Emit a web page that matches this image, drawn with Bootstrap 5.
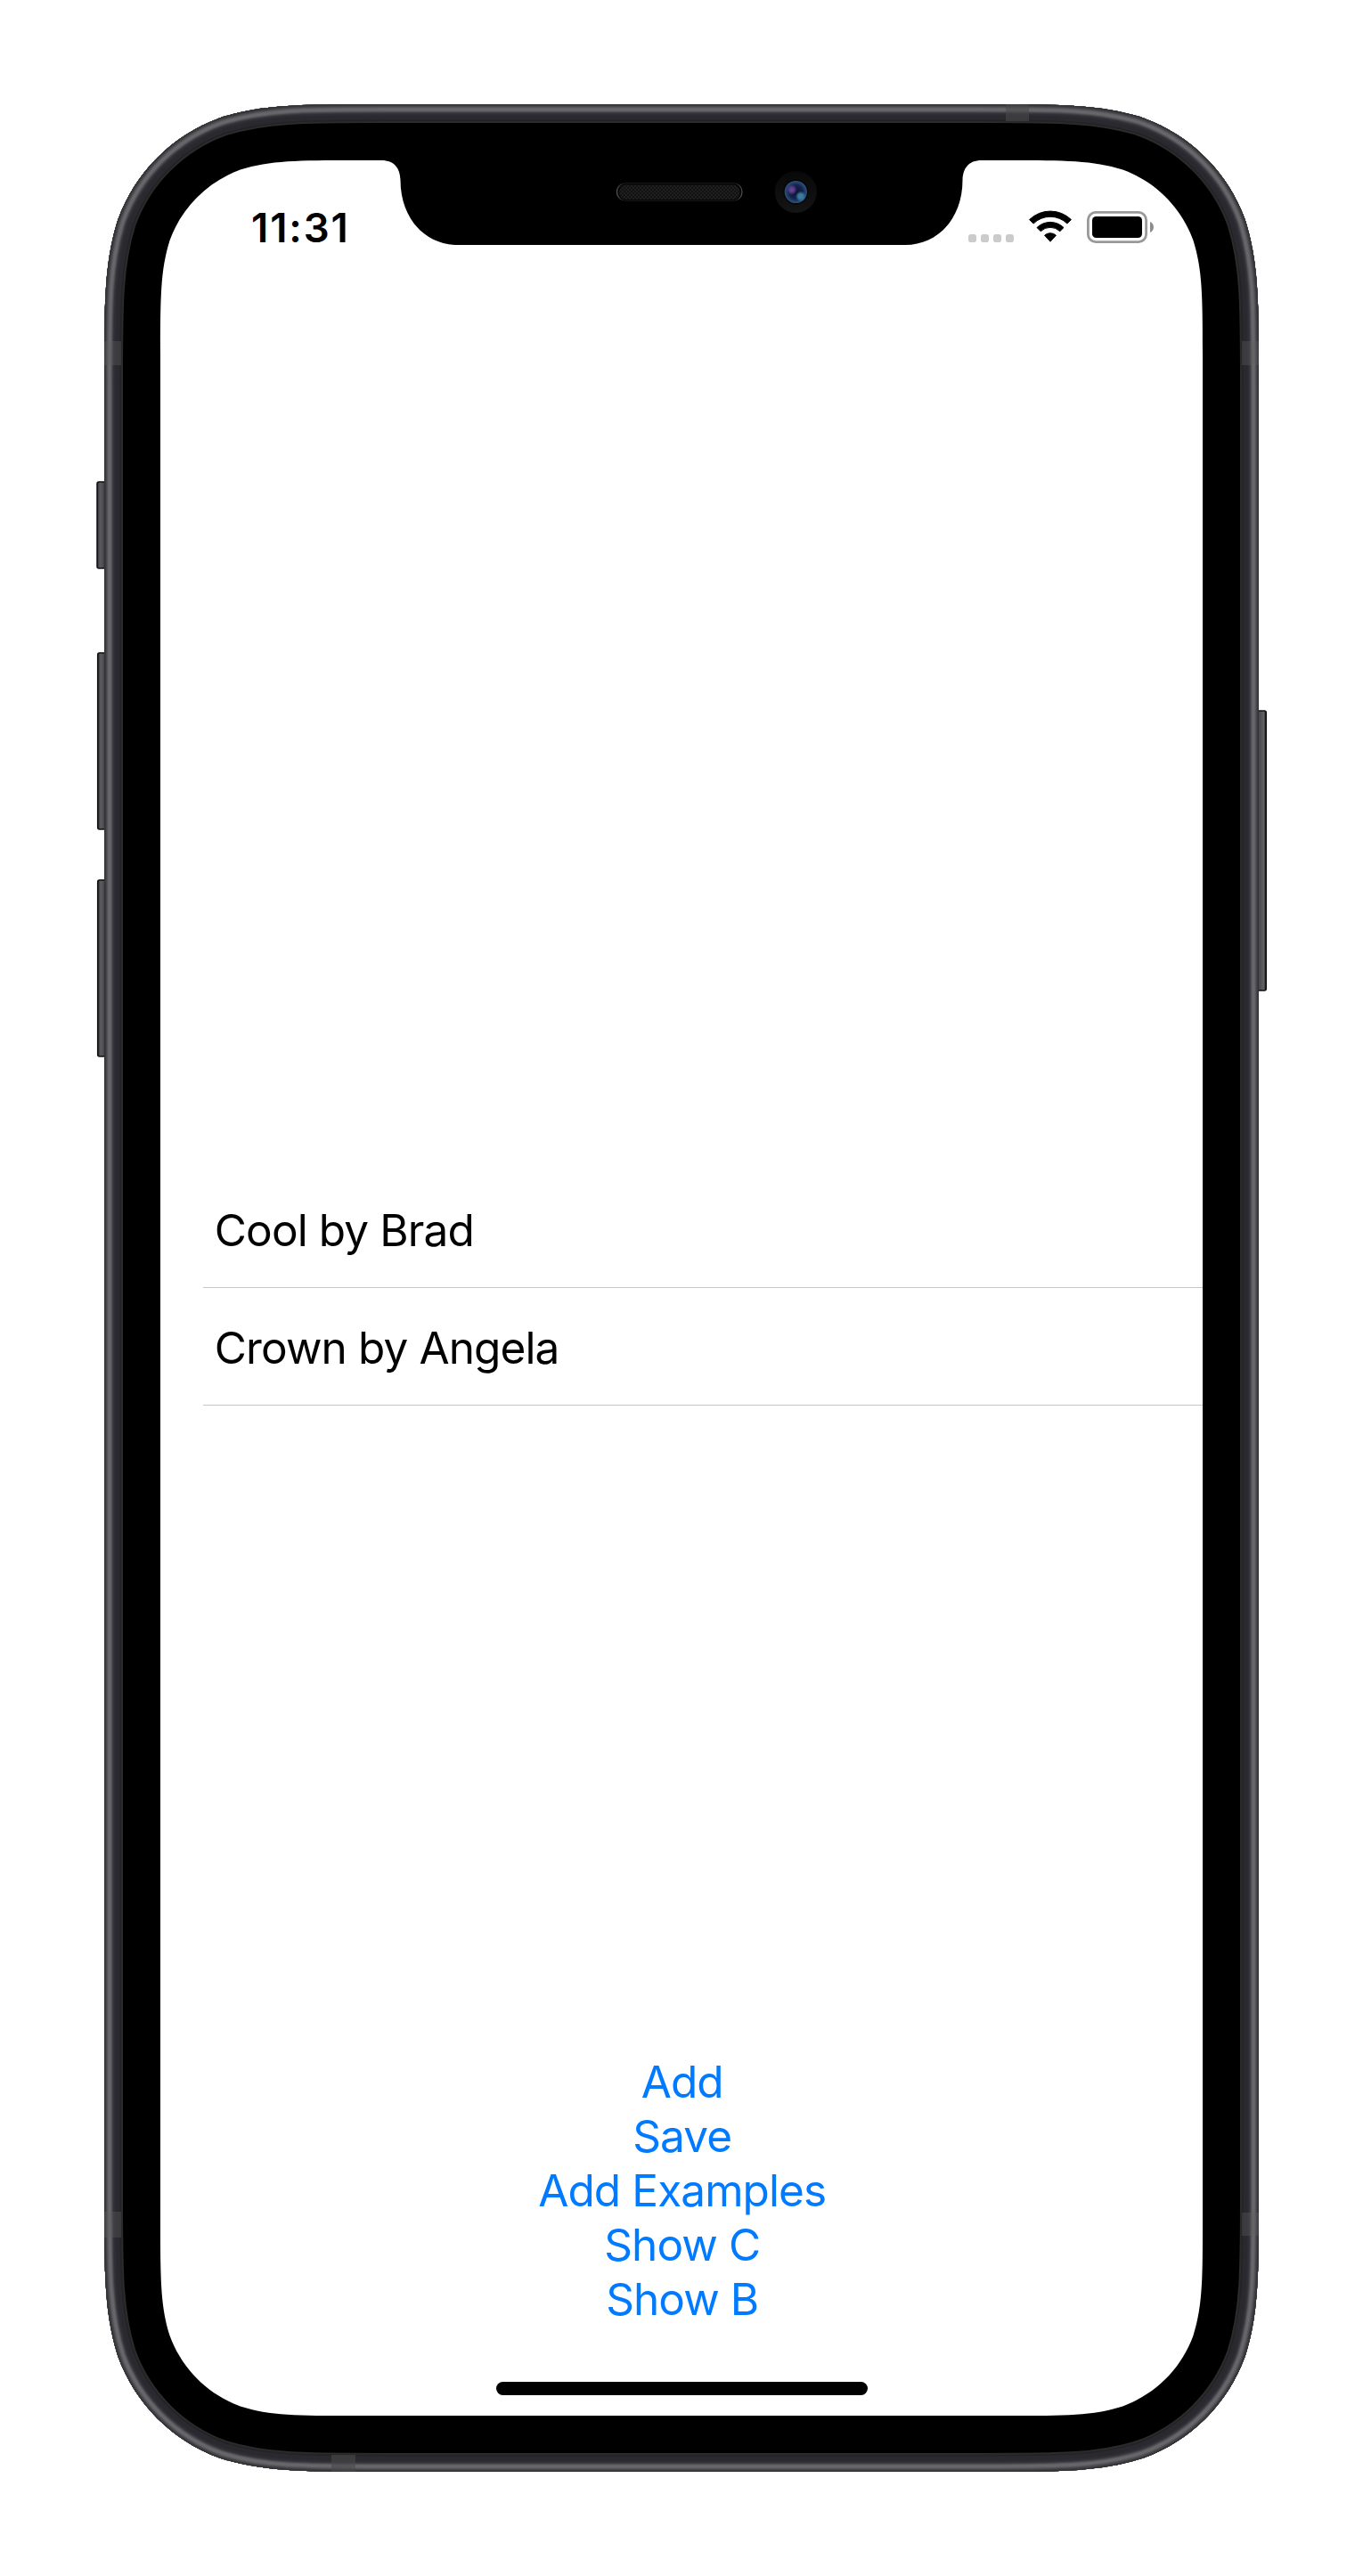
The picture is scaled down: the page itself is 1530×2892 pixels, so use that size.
<!DOCTYPE html>
<html lang="en">
<head>
<meta charset="utf-8">
<meta name="viewport" content="width=device-width, initial-scale=1">
<title>Songs</title>
<link href="https://cdn.jsdelivr.net/npm/bootstrap@5.3.0/dist/css/bootstrap.min.css" rel="stylesheet">
<style>
  body { font-family: Inter, "Liberation Sans", sans-serif; background: #fff; color: #000; }
  .device { width: 1530px; height: 2892px; padding: 180px; }
  .device-art { left: 0; top: 0; pointer-events: none; }
  .screen { z-index: 1; }
  .status-bar { height: 132px; padding: 56px 55px 0 102px; }
  .clock { font-size: 45.5px; font-weight: 600; line-height: 55px; margin-top: -8px; letter-spacing: 1.9px; }
  .song-list { margin: 1002px 0 0 48px; }
  .song-list .list-group-item { height: 132px; padding: 3px 0 0 12.8px; line-height: 128px; font-size: 49.5px; letter-spacing: -.88px; color: #000; background: none; border: 0; border-bottom: 1px solid #c6c6c8; border-radius: 0; }
  .actions { padding: 0 0 62px 1.5px; }
  .actions .btn { font-size: 49.5px; line-height: 61px; letter-spacing: -.9px; color: #007aff; text-decoration: none; }
  .home-bar { width: 417px; height: 15px; margin-bottom: 23px; background: #000; }
</style>
</head>
<body>
<div class="device position-relative d-flex">
  <svg class="device-art position-absolute" width="1530" height="2892" viewBox="0 0 1530 2892" aria-hidden="true">
    <defs>
      <path id="body" d="M117 430.4C117 340.1 117 295 132.4 246.5C151.7 193.4 193.4 151.7 246.5 132.4C295 117 340.1 117 430.4 117H1099.6c90.3 0 135.4 0 183.9 15.4c53.1 19.3 94.8 61 114.1 114.1C1413 295 1413 340.1 1413 430.4V2461.6c0 90.3 0 135.4-15.4 183.9c-19.3 53.1-61 94.8-114.1 114.1c-48.5 15.4-93.6 15.4-183.9 15.4H430.4c-90.3 0-135.4 0-183.9-15.4c-53.1-19.3-94.8-61-114.1-114.1C117 2597 117 2551.9 117 2461.6Z"/>
      <clipPath id="bodyClip"><use href="#body"/></clipPath>
      <linearGradient id="keyL"><stop offset="0" stop-color="#222126"/><stop offset=".25" stop-color="#5c5b60"/><stop offset=".5" stop-color="#504f54"/><stop offset=".7" stop-color="#3c3b40"/><stop offset="1" stop-color="#36353a"/></linearGradient>
      <linearGradient id="keyR"><stop offset="0" stop-color="#3c3b40"/><stop offset=".4" stop-color="#4c4b50"/><stop offset=".78" stop-color="#626166"/><stop offset="1" stop-color="#111"/></linearGradient>
      <linearGradient id="ring" x1="0" y1="0" x2="0" y2="1"><stop offset="0" stop-color="#080808"/><stop offset="1" stop-color="#141414"/></linearGradient>
      <radialGradient id="lens"><stop offset="0" stop-color="#0c1230"/><stop offset=".6" stop-color="#13234c"/><stop offset="1" stop-color="#2b5580"/></radialGradient>
      <radialGradient id="violet"><stop offset="0" stop-color="#6d4898"/><stop offset=".4" stop-color="#5c3e8c"/><stop offset="1" stop-color="#5c3e8c" stop-opacity="0"/></radialGradient>
      <radialGradient id="cyan"><stop offset="0" stop-color="#4080a4"/><stop offset=".5" stop-color="#38749a"/><stop offset="1" stop-color="#38749a" stop-opacity="0"/></radialGradient>
      <linearGradient id="rim"><stop offset="0" stop-color="#555"/><stop offset=".05" stop-color="#161616"/><stop offset=".95" stop-color="#161616"/><stop offset="1" stop-color="#555"/></linearGradient>
      <pattern id="mesh" width="4" height="4" patternUnits="userSpaceOnUse"><path fill="#121212" d="M0 0h4v4H0z"/><path fill="#1f1f1f" d="M0 0h2v2H0zM2 2h2v2H2z"/></pattern>
    </defs>

    <!-- side keys -->
    <g stroke="#111015" stroke-width="1.5">
      <rect x="109" y="541" width="12" height="97" rx="2" fill="url(#keyL)"/>
      <rect x="109.7" y="733" width="12" height="198" rx="2" fill="url(#keyL)"/>
      <rect x="109.7" y="988" width="12" height="198" rx="2" fill="url(#keyL)"/>
      <rect x="1409" y="798" width="12.3" height="314" rx="2" fill="url(#keyR)"/>
    </g>

    <!-- metal band, shaded from the inner edge outwards -->
    <g clip-path="url(#bodyClip)">
      <use href="#body" fill="#000"/>
      <g fill="none" stroke-linejoin="round">
        <use href="#body" stroke="#2b2b2a" stroke-width="42"/>
        <use href="#body" stroke="#232226" stroke-width="38"/>
        <use href="#body" stroke="#2a292f" stroke-width="35"/>
        <use href="#body" stroke="#2f2e34" stroke-width="25"/>
        <use href="#body" stroke="#39383d" stroke-width="21"/>
        <use href="#body" stroke="#48474b" stroke-width="19"/>
        <use href="#body" stroke="#5a595e" stroke-width="17"/>
        <use href="#body" stroke="#67666b" stroke-width="15"/>
        <use href="#body" stroke="#626166" stroke-width="10"/>
        <use href="#body" stroke="#545358" stroke-width="8"/>
        <use href="#body" stroke="#47464a" stroke-width="6"/>
        <use href="#body" stroke="#3c3b3f" stroke-width="4"/>
        <use href="#body" stroke="#333236" stroke-width="2"/>
      </g>
      <path fill="#626260" fill-opacity=".34" d="M117 383h19v27h-19zM1394 383h19v27h-19zM117 2483h19v29h-19zM1394 2484h19v26h-19z"/>
      <path fill="#4a4a4a" fill-opacity=".6" d="M1129 117h26v19h-26zM372 2756h27v19h-27z"/>
    </g>

    <!-- display with notch cut-out -->
    <path fill="#fff" d="M180 397.1c0-62.5 0-93.8 10.6-127.4c13.4-36.8 42.3-65.7 79.1-79.1c33.6-10.6 64.9-10.6 127.4-10.6H428C443 180 449 189 449.5 202C449.5 245 477 275 514 275H1016C1053 275 1080.5 245 1080.5 202C1081 189 1087 180 1102 180H1132.9c62.5 0 93.8 0 127.4 10.6c36.8 13.4 65.7 42.3 79.1 79.1c10.6 33.6 10.6 64.9 10.6 127.4V2494.9c0 62.5 0 93.8-10.6 127.4c-13.4 36.8-42.3 65.7-79.1 79.1c-33.6 10.6-64.9 10.6-127.4 10.6H397.1c-62.5 0-93.8 0-127.4-10.6c-36.8-13.4-65.7-42.3-79.1-79.1c-10.6-33.6-10.6-64.9-10.6-127.4Z"/>

    <!-- speaker and camera -->
    <rect x="692.5" y="205.5" width="140.5" height="20" rx="10" fill="#050505" stroke="url(#rim)" stroke-width="1.2"/>
    <rect x="695" y="207.5" width="135.5" height="16.5" rx="8" fill="url(#mesh)"/>
    <circle cx="893.3" cy="215.5" r="23.5" fill="url(#ring)"/>
    <circle cx="893.3" cy="215.5" r="14" fill="#050507"/>
    <circle cx="893.3" cy="215.5" r="12.6" fill="url(#lens)"/>
    <circle cx="888.8" cy="213" r="6" fill="url(#violet)"/>
    <circle cx="898.8" cy="220.5" r="6" fill="url(#cyan)"/>
  </svg>

  <main class="screen position-relative d-flex flex-column flex-grow-1">
    <header class="status-bar d-flex justify-content-between align-items-start">
      <span class="clock">11:31</span>
      <svg width="208" height="37" viewBox="1087 236 208 37" role="img" aria-label="Signal, Wi-Fi, battery">
        <g fill="#cbcbcb"><rect x="1087" y="263" width="9" height="9" rx="2.8"/><rect x="1101" y="263" width="9" height="9" rx="2.8"/><rect x="1115" y="263" width="9" height="9" rx="2.8"/><rect x="1129" y="263" width="9" height="9" rx="2.8"/></g>
        <g stroke="#000" stroke-width="1" stroke-linejoin="round">
          <path d="M1155.6 246.6A33.5 33.5 0 0 1 1202.4 246.6L1197.9 251A27 27 0 0 0 1160.1 251Z"/>
          <path d="M1164 255.5A21.5 21.5 0 0 1 1194 255.5L1189.8 259.7A15.4 15.4 0 0 0 1168.2 259.7Z"/>
          <path d="M1172.6 264.2A9.5 9.5 0 0 1 1185.4 264.2L1179 271.2Z"/>
        </g>
        <rect x="1221.4" y="238.4" width="65.2" height="33.2" rx="8.5" fill="none" stroke="#999" stroke-width="2.8"/>
        <rect x="1226" y="243" width="56" height="24" rx="4.5"/>
        <path fill="#8c8c8c" d="M1291 249c5.3 2 5.3 10 0 12z"/>
      </svg>
    </header>

    <ul class="list-group song-list">
      <li class="list-group-item">Cool by Brad</li>
      <li class="list-group-item">Crown by Angela</li>
    </ul>

    <footer class="mt-auto d-flex flex-column align-items-center">
      <div class="actions d-flex flex-column align-items-center">
        <button type="button" class="btn btn-link p-0 border-0">Add</button>
        <button type="button" class="btn btn-link p-0 border-0">Save</button>
        <button type="button" class="btn btn-link p-0 border-0">Add Examples</button>
        <button type="button" class="btn btn-link p-0 border-0">Show C</button>
        <button type="button" class="btn btn-link p-0 border-0">Show B</button>
      </div>
      <div class="home-bar rounded-pill"></div>
    </footer>
  </main>
</div>
<script src="https://cdn.jsdelivr.net/npm/bootstrap@5.3.0/dist/js/bootstrap.bundle.min.js"></script>
</body>
</html>
